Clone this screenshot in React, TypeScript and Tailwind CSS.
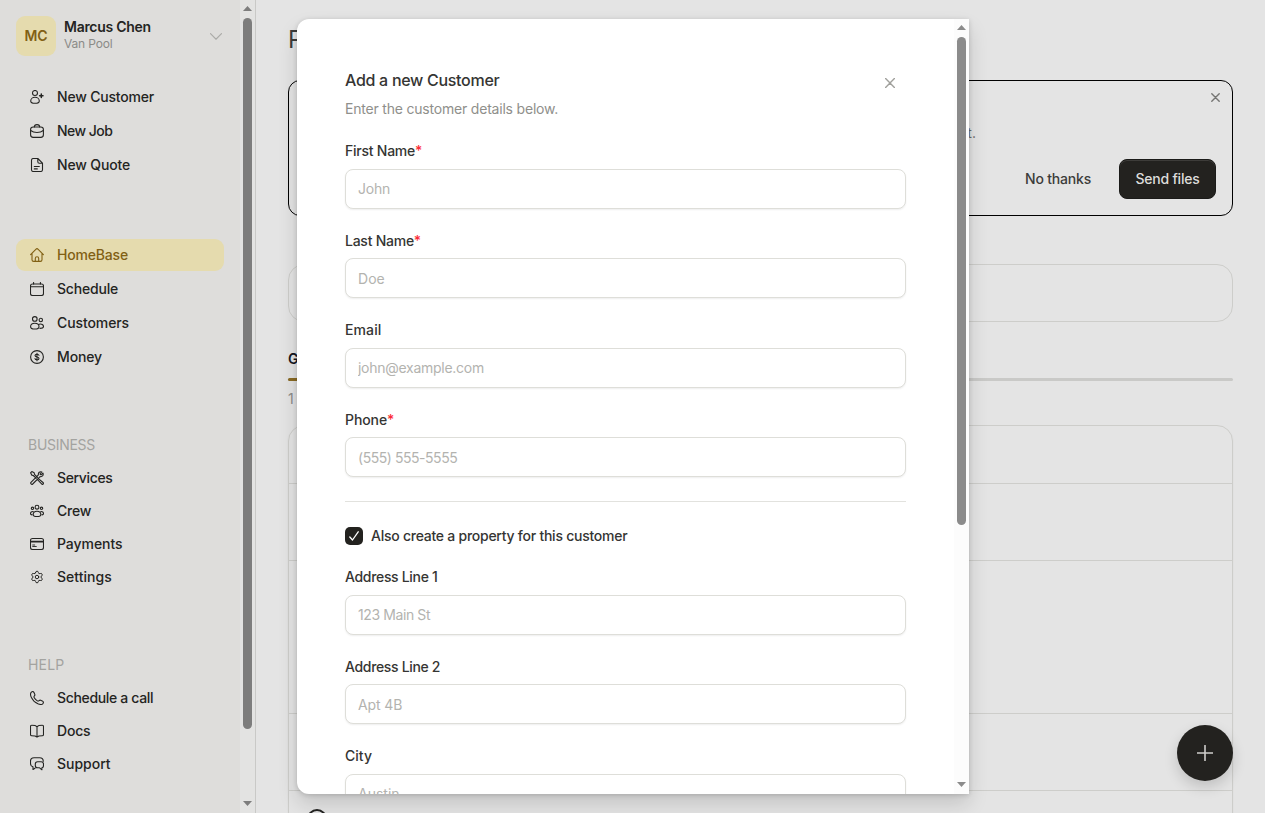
import type { ReactNode } from "react";
import { Settings } from "lucide-react";

type NavItem = {
  label: string;
  icon: ReactNode;
  tracking: string;
  active?: boolean;
};

type Field = {
  label: string;
  placeholder: string;
  labelTracking: string;
  inputTracking: string;
  required?: boolean;
};

function Icon({ children }: { children: ReactNode }) {
  return (
    <svg
      className="size-[14px] shrink-0"
      viewBox="0 0 14 14"
      fill="none"
      stroke="currentColor"
      strokeWidth="1.1"
      strokeLinecap="round"
      strokeLinejoin="round"
    >
      {children}
    </svg>
  );
}

const quickActions: NavItem[] = [
  {
    label: "New Customer",
    tracking: "tracking-[-0.19px]",
    icon: (
      <Icon>
        <circle cx="5" cy="3" r="2.5" />
        <path d="M5 7.300c2.400 0 4.300 1.700 4.300 3.700 0 1.600-1.500 2.300-4.300 2.300S.7 12.600.7 11C.7 9 2.600 7.300 5 7.300Z" />
        <path d="M11.300 4v3.400M9.600 5.700H13" strokeWidth="1.5" />
      </Icon>
    ),
  },
  {
    label: "New Job",
    tracking: "tracking-[-0.55px]",
    icon: (
      <Icon>
        <rect x=".6" y="3" width="12.8" height="10.4" rx="2.6" />
        <path d="M4.300 3C4.300 1.500 5.300.6 7 .6S9.700 1.500 9.700 3M.7 6.500C2.500 8 4.600 8.500 7 8.500s4.500-.5 6.300-2" />
      </Icon>
    ),
  },
  {
    label: "New Quote",
    tracking: "tracking-[-0.16px]",
    icon: (
      <Icon>
        <path d="M7.800.5H3.300C2.200.5 1.500 1.200 1.500 2.300v9.400c0 1.100.7 1.800 1.800 1.800h7.400c1.100 0 1.800-.7 1.800-1.800V5.200ZM7.800.5v3.200c0 1 .5 1.500 1.500 1.500h3.200M4.300 8.500h5M4.300 10.900h3" />
      </Icon>
    ),
  },
];

const mainNav: NavItem[] = [
  {
    label: "HomeBase",
    tracking: "tracking-[-0.18px]",
    active: true,
    icon: (
      <Icon>
        <path d="M.6 6.600 5.800 1.300c.8-.8 1.600-.8 2.400 0l5.200 5.300M2 5.400v6.300c0 1.100.7 1.700 1.700 1.700h6.600c1 0 1.700-.6 1.700-1.700V5.400M5.300 13.300V10.500c0-1 .7-1.700 1.700-1.700s1.700.7 1.700 1.700v2.800" />
      </Icon>
    ),
  },
  {
    label: "Schedule",
    tracking: "tracking-[-0.2px]",
    icon: (
      <Icon>
        <rect x=".5" y="2" width="13" height="11.500" rx="2" />
        <path d="M.5 4.800h13M3.600.5V2M10.400.5V2" />
      </Icon>
    ),
  },
  {
    label: "Customers",
    tracking: "tracking-[-0.1px]",
    icon: (
      <Icon>
        <circle cx="4.800" cy="2.900" r="2.300" />
        <circle cx="10.800" cy="4" r="1.700" />
        <path d="M4.800 7.300c2.500 0 4.200 1.500 4.200 3.400 0 1.600-1.500 2.300-4.200 2.300S.6 12.300.6 10.700c0-1.900 1.700-3.400 4.200-3.400ZM9.200 8.200c2.500-.8 4.300.6 4.300 2.300 0 1.200-1.200 1.900-3.500 1.900" />
      </Icon>
    ),
  },
  {
    label: "Money",
    tracking: "tracking-[-0.13px]",
    icon: (
      <Icon>
        <circle cx="7" cy="7" r="6.400" />
        <path d="M9 5.300C8.800 4.600 8 4.200 7 4.200c-1.200 0-2 .5-2 1.400 0 2 4 .8 4 2.800 0 .9-.8 1.400-2 1.400-1.100 0-1.900-.4-2-1.200M7 3.200v7.600" />
      </Icon>
    ),
  },
];

const businessNav: NavItem[] = [
  {
    label: "Services",
    tracking: "tracking-[-0.35px]",
    icon: (
      <Icon>
        <path d="M.6 1.800 1.800.6l2.400 1.200.3 1.500 3 3M8.700 7.900l4.300 3.600c.6.600.6 1 .1 1.500s-1 .5-1.500-.1L7.700 8.900M3.300 4.500 1.700 4.100.6 1.800M3.300 4.500 6.200 7.300M12.900 2.100l-1.900 1.800-1-.9L11.800 1C10 .2 7.900 1.600 8.400 3.900L1 11.300c-1 1.100.6 2.700 1.700 1.700L10.100 5.600c2.300.5 3.700-1.600 2.800-3.500Z" />
      </Icon>
    ),
  },
  {
    label: "Crew",
    tracking: "tracking-[-0.25px]",
    icon: (
      <Icon>
        <circle cx="7" cy="3.200" r="1.900" />
        <circle cx="2.500" cy="4.300" r="1.200" />
        <circle cx="11.500" cy="4.300" r="1.200" />
        <path d="M7 7.200c2.200 0 3.800 1.400 3.800 3.200 0 1.500-1.300 2.100-3.800 2.100s-3.800-.6-3.800-2.100c0-1.800 1.600-3.200 3.800-3.200ZM3.200 7.500C1.600 7.300.5 8.300.5 9.400c0 .8.500 1.300 1.500 1.500M10.800 7.500c1.600-.2 2.700.8 2.700 1.900 0 .8-.5 1.300-1.500 1.500" />
      </Icon>
    ),
  },
  {
    label: "Payments",
    tracking: "tracking-[-0.06px]",
    icon: (
      <Icon>
        <rect x=".5" y="1.500" width="13" height="11" rx="2" />
        <path d="M2.700 9.500h3.600M2.700 8h2" strokeWidth=".9" />
        <path d="M.5 4.600h13" strokeWidth="1.600" />
      </Icon>
    ),
  },
  {
    label: "Settings",
    tracking: "tracking-[0.03px]",
    icon: <Settings className="size-[14px] shrink-0" strokeWidth={1.7} />,
  },
];

const helpNav: NavItem[] = [
  {
    label: "Schedule a call",
    tracking: "tracking-[-0.34px]",
    icon: (
      <Icon>
        <path d="M1.200 1.300C2.500.1 3.600.5 4.100 1.700l.7 1.700c.2.600.1 1-.4 1.500-.7.700-.6 1.200 0 2.100.7 1.100 1.500 1.900 2.600 2.600.9.600 1.400.7 2.100 0 .5-.5.900-.6 1.500-.4l1.700.7c1.200.5 1.600 1.600.4 2.900-1 1-2.800.8-4.800 0C5 11.500 2.500 9 1.200 6.100.4 4.100.2 2.300 1.200 1.300Z" />
      </Icon>
    ),
  },
  {
    label: "Docs",
    tracking: "tracking-[-0.2px]",
    icon: (
      <Icon>
        <path d="M7 2.600C5.900 1.500 4.300 1.300 1.700 1.300c-.8 0-1.200.4-1.200 1.200v8c0 .8.400 1.200 1.200 1.200 2.600 0 4.200.2 5.300 1.300 1.100-1.100 2.700-1.300 5.300-1.300.8 0 1.200-.4 1.200-1.200v-8c0-.8-.4-1.200-1.200-1.200C9.700 1.300 8.100 1.500 7 2.600ZM7 2.600V13" />
      </Icon>
    ),
  },
  {
    label: "Support",
    tracking: "tracking-[-0.02px]",
    icon: (
      <Icon>
        <path d="M13.300 4.200C13.200 1.700 12.200.7 9.700.7H4.100C1.600.7.5 1.800.5 4.200v2.300c0 2 .8 3.100 2.500 3.400v2.600l2-1.300M7.600 4.800h3.600c1.600 0 2.300.7 2.300 2.300v1.400c0 1.300-.5 2-1.600 2.200v2.100l-2.300-2H7.600c-1.600 0-2.300-.7-2.300-2.300V7.100c0-1.600.7-2.300 2.300-2.300Z" />
      </Icon>
    ),
  },
];

const contactFields: Field[] = [
  { label: "First Name", placeholder: "John", labelTracking: "tracking-[-0.24px]", inputTracking: "tracking-[-0.2px]", required: true },
  { label: "Last Name", placeholder: "Doe", labelTracking: "tracking-[-0.25px]", inputTracking: "tracking-[0.05px]", required: true },
  { label: "Email", placeholder: "john@example.com", labelTracking: "tracking-[0.1px]", inputTracking: "tracking-[-0.27px]" },
  { label: "Phone", placeholder: "(555) 555-5555", labelTracking: "tracking-[-0.1px]", inputTracking: "tracking-[-0.46px]", required: true },
];

const addressFields: Field[] = [
  { label: "Address Line 1", placeholder: "123 Main St", labelTracking: "tracking-[-0.32px]", inputTracking: "tracking-[-0.4px]" },
  { label: "Address Line 2", placeholder: "Apt 4B", labelTracking: "tracking-[-0.33px]", inputTracking: "tracking-[-0.1px]" },
  { label: "City", placeholder: "Austin", labelTracking: "tracking-[0.03px]", inputTracking: "tracking-[0px]" },
];

function NavList({ items, compact }: { items: NavItem[]; compact?: boolean }) {
  return (
    <ul className={compact ? "flex flex-col gap-px" : "flex flex-col gap-0.5"}>
      {items.map((item) => (
        <li
          key={item.label}
          className={`flex h-8 items-center gap-[13px] rounded-[9px] pl-[14px] text-sm font-medium ${item.tracking} ${
            item.active ? "bg-[#e5dbae] text-[#816014]" : "text-[#242422]"
          }`}
        >
          {item.icon}
          <span>{item.label}</span>
        </li>
      ))}
    </ul>
  );
}

// vertical scrollbar with arrow buttons
function Scrollbar({ track, thumb, size }: { track: string; thumb: string; size: string }) {
  return (
    <div className={`flex w-[15px] shrink-0 flex-col items-center ${track} ${thumb}`}>
      <svg className="mt-[6px] h-[5px] w-[9px] shrink-0" viewBox="0 0 9 5" fill="currentColor">
        <path d="M4.500 0 9 5H0Z" />
      </svg>
      <div className={`mt-[7px] w-[9px] shrink-0 rounded-full bg-current ${size}`} />
      <svg className="mt-auto mb-[7px] h-[5px] w-[9px] shrink-0" viewBox="0 0 9 5" fill="currentColor">
        <path d="M0 0h9L4.500 5Z" />
      </svg>
    </div>
  );
}

function Sidebar() {
  return (
    <aside className="flex w-64 shrink-0 border-r border-[#c9c9c7] bg-[#dedddb]">
      <div className="flex flex-1 flex-col px-4 pt-4">
        <div className="flex h-10 items-center">
          <div className="flex size-10 items-center justify-center rounded-[9px] bg-[#e5dbae] text-sm font-semibold text-[#816014]">
            MC
          </div>
          <div className="ml-2 flex-1 pb-[3px]">
            <div className="text-sm leading-[19px] font-semibold tracking-[-0.28px] text-[#242422]">Marcus Chen</div>
            <div className="text-xs leading-[16px] tracking-[-0.16px] text-[#8b8b88]">Van Pool</div>
          </div>
          <svg className="mr-0.5 h-[7px] w-3" viewBox="0 0 12 7" fill="none" stroke="#aaaaa7" strokeWidth="1.200" strokeLinecap="round">
            <path d="m.5.7 5.500 5.500L11.500.7" />
          </svg>
        </div>

        <nav className="mt-[25px] flex flex-col">
          <NavList items={quickActions} />
          <div className="mt-[58px]">
            <NavList items={mainNav} />
          </div>
          <h3 className="mt-[62px] pl-3 text-sm leading-5 tracking-[-0.28px] text-[#a3a3a0]">BUSINESS</h3>
          <div className="mt-[7px]">
            <NavList items={businessNav} compact />
          </div>
          <h3 className="mt-[62px] pl-3 text-sm leading-5 tracking-[0.2px] text-[#a3a3a0]">HELP</h3>
          <div className="mt-[7px]">
            <NavList items={helpNav} compact />
          </div>
        </nav>
      </div>
      <Scrollbar track="bg-[#e3e3e2]" thumb="text-[#7d7d7d]" size="h-[711px]" />
    </aside>
  );
}

function Dashboard() {
  return (
    <main className="flex flex-1 flex-col overflow-hidden px-8">
      <h1 className="mt-[23px] text-2xl leading-[34px] font-normal text-[#3c3c3a]">Pool</h1>

      <section className="mt-[23px] flex h-[136px] shrink-0 flex-col items-end rounded-xl border border-black px-4">
        <svg className="mt-3 -mr-1 size-[9px]" viewBox="0 0 9 9" stroke="#757573" strokeWidth="1.400" strokeLinecap="round">
          <path d="m.8.8 7.400 7.400M8.200.8.8 8.200" />
        </svg>
        <p className="mt-[21px] mr-60 text-sm leading-5 text-[#6b6b69]">about it.</p>
        <div className="mt-4 flex items-center gap-7">
          <span className="text-sm font-medium tracking-[-0.19px] text-[#3c3c3a]">No thanks</span>
          <button className="h-10 w-[97px] rounded-lg border border-[#1b1b19] bg-[#23221f] text-sm font-medium tracking-[-0.22px] text-[#dedddb] shadow-[inset_0_1px_0_#3d3c39]">
            Send files
          </button>
        </div>
      </section>

      <section className="mt-12 h-[58px] shrink-0 rounded-2xl border border-[#cdcdca]" />

      <h2 className="mt-[27px] text-sm leading-5 font-semibold text-[#17171f]">Get started</h2>
      <div className="mt-[9px] flex h-[3px] shrink-0 rounded-full bg-[#c9c9c7]">
        <div className="w-[200px] rounded-full bg-[#8a6b25]" />
      </div>
      <p className="mt-2 text-sm leading-5 text-[#8b8b88]">1 of 5</p>

      <section className="mt-4 flex h-[480px] shrink-0 flex-col rounded-2xl border border-[#cdcdca] shadow-[0_1px_2px_rgba(0,0,0,0.06)]">
        <div className="h-[58px] border-b border-[#cdcdca]" />
        <div className="h-[77px] border-b border-[#cdcdca]" />
        <div className="h-[153px] border-b border-[#cdcdca]" />
        <div className="h-[77px] border-b border-[#cdcdca]" />
        <div className="mt-[18px] ml-[18px] size-5 rounded-full border-2 border-[#242422]" />
      </section>
    </main>
  );
}

function FormField({ field }: { field: Field }) {
  return (
    <label className="flex flex-col gap-2">
      <span className={`pb-0.5 text-sm leading-[15.5px] font-medium text-[#353533] ${field.labelTracking}`}>
        {field.label}
        {field.required && <span className="text-[#fb2c36]">*</span>}
      </span>
      <input
        className={`h-10 w-full rounded-lg border border-[#deded9] bg-white px-3 text-sm shadow-[0_1px_2px_rgba(0,0,0,0.07)] outline-none placeholder:text-[#b3b3af] ${field.inputTracking}`}
        placeholder={field.placeholder}
      />
    </label>
  );
}

function CustomerDialog() {
  return (
    <div
      role="dialog"
      className="flex h-[775px] w-[672px] overflow-hidden rounded-l-xl bg-white shadow-[0_10px_20px_rgba(0,0,0,0.14),0_1px_5px_rgba(0,0,0,0.16)]"
    >
      <div className="flex-1 overflow-hidden pt-[49px] pr-12 pl-12">
        <header className="flex justify-between">
          <div>
            <h2 className="text-base leading-6 font-medium tracking-[-0.29px] text-[#353533]">Add a new Customer</h2>
            <p className="mt-[7px] text-sm leading-5 tracking-[-0.2px] text-[#8f8f8b]">
              Enter the customer details below.
            </p>
          </div>
          <svg className="mt-[10px] mr-[11px] size-[10px]" viewBox="0 0 10 10" stroke="#a0a09c" strokeWidth="1.400" strokeLinecap="round">
            <path d="m.6.6 8.800 8.800M9.400.6.6 9.400" />
          </svg>
        </header>

        <form className="mt-[24.250px] flex flex-col gap-6">
          {contactFields.map((field) => (
            <FormField key={field.label} field={field} />
          ))}
          <div className="h-px bg-[#e2e2de]" />
          <div className="flex h-[18.750px] items-end gap-2">
            <span className="flex size-[18px] items-center justify-center rounded-[5px] bg-[#23221f]">
              <svg className="h-[10px] w-[10px]" viewBox="0 0 10 10" fill="none" stroke="white" strokeWidth="1.300" strokeLinecap="round" strokeLinejoin="round">
                <path d="m.8 6 2.700 3L9.200.8" />
              </svg>
            </span>
            <span className="text-sm leading-[19px] font-medium tracking-[-0.25px] text-[#353533]">
              Also create a property for this customer
            </span>
          </div>
          {addressFields.map((field) => (
            <FormField key={field.label} field={field} />
          ))}
        </form>
      </div>
      <Scrollbar track="bg-[#fcfcfc]" thumb="text-[#8b8b8b]" size="h-[488px]" />
    </div>
  );
}

export default function App() {
  return (
    <div className="h-[813px] overflow-hidden bg-white font-['Inter','Liberation_Sans',sans-serif]">
      <div className="relative flex h-full w-[1265px] bg-[#e4e4e4]">
        <Sidebar />
        <Dashboard />

        <button className="absolute right-8 bottom-8 flex size-14 items-center justify-center rounded-full bg-[#23221f] shadow-[0_6px_14px_rgba(0,0,0,0.16)]">
          <svg className="size-4" viewBox="0 0 16 16" stroke="#cfcecb" strokeWidth="1.600" strokeLinecap="round">
            <path d="M8 .5v15M.5 8h15" />
          </svg>
        </button>

        <div className="absolute top-[19px] left-[297px]">
          <CustomerDialog />
        </div>
      </div>
    </div>
  );
}
